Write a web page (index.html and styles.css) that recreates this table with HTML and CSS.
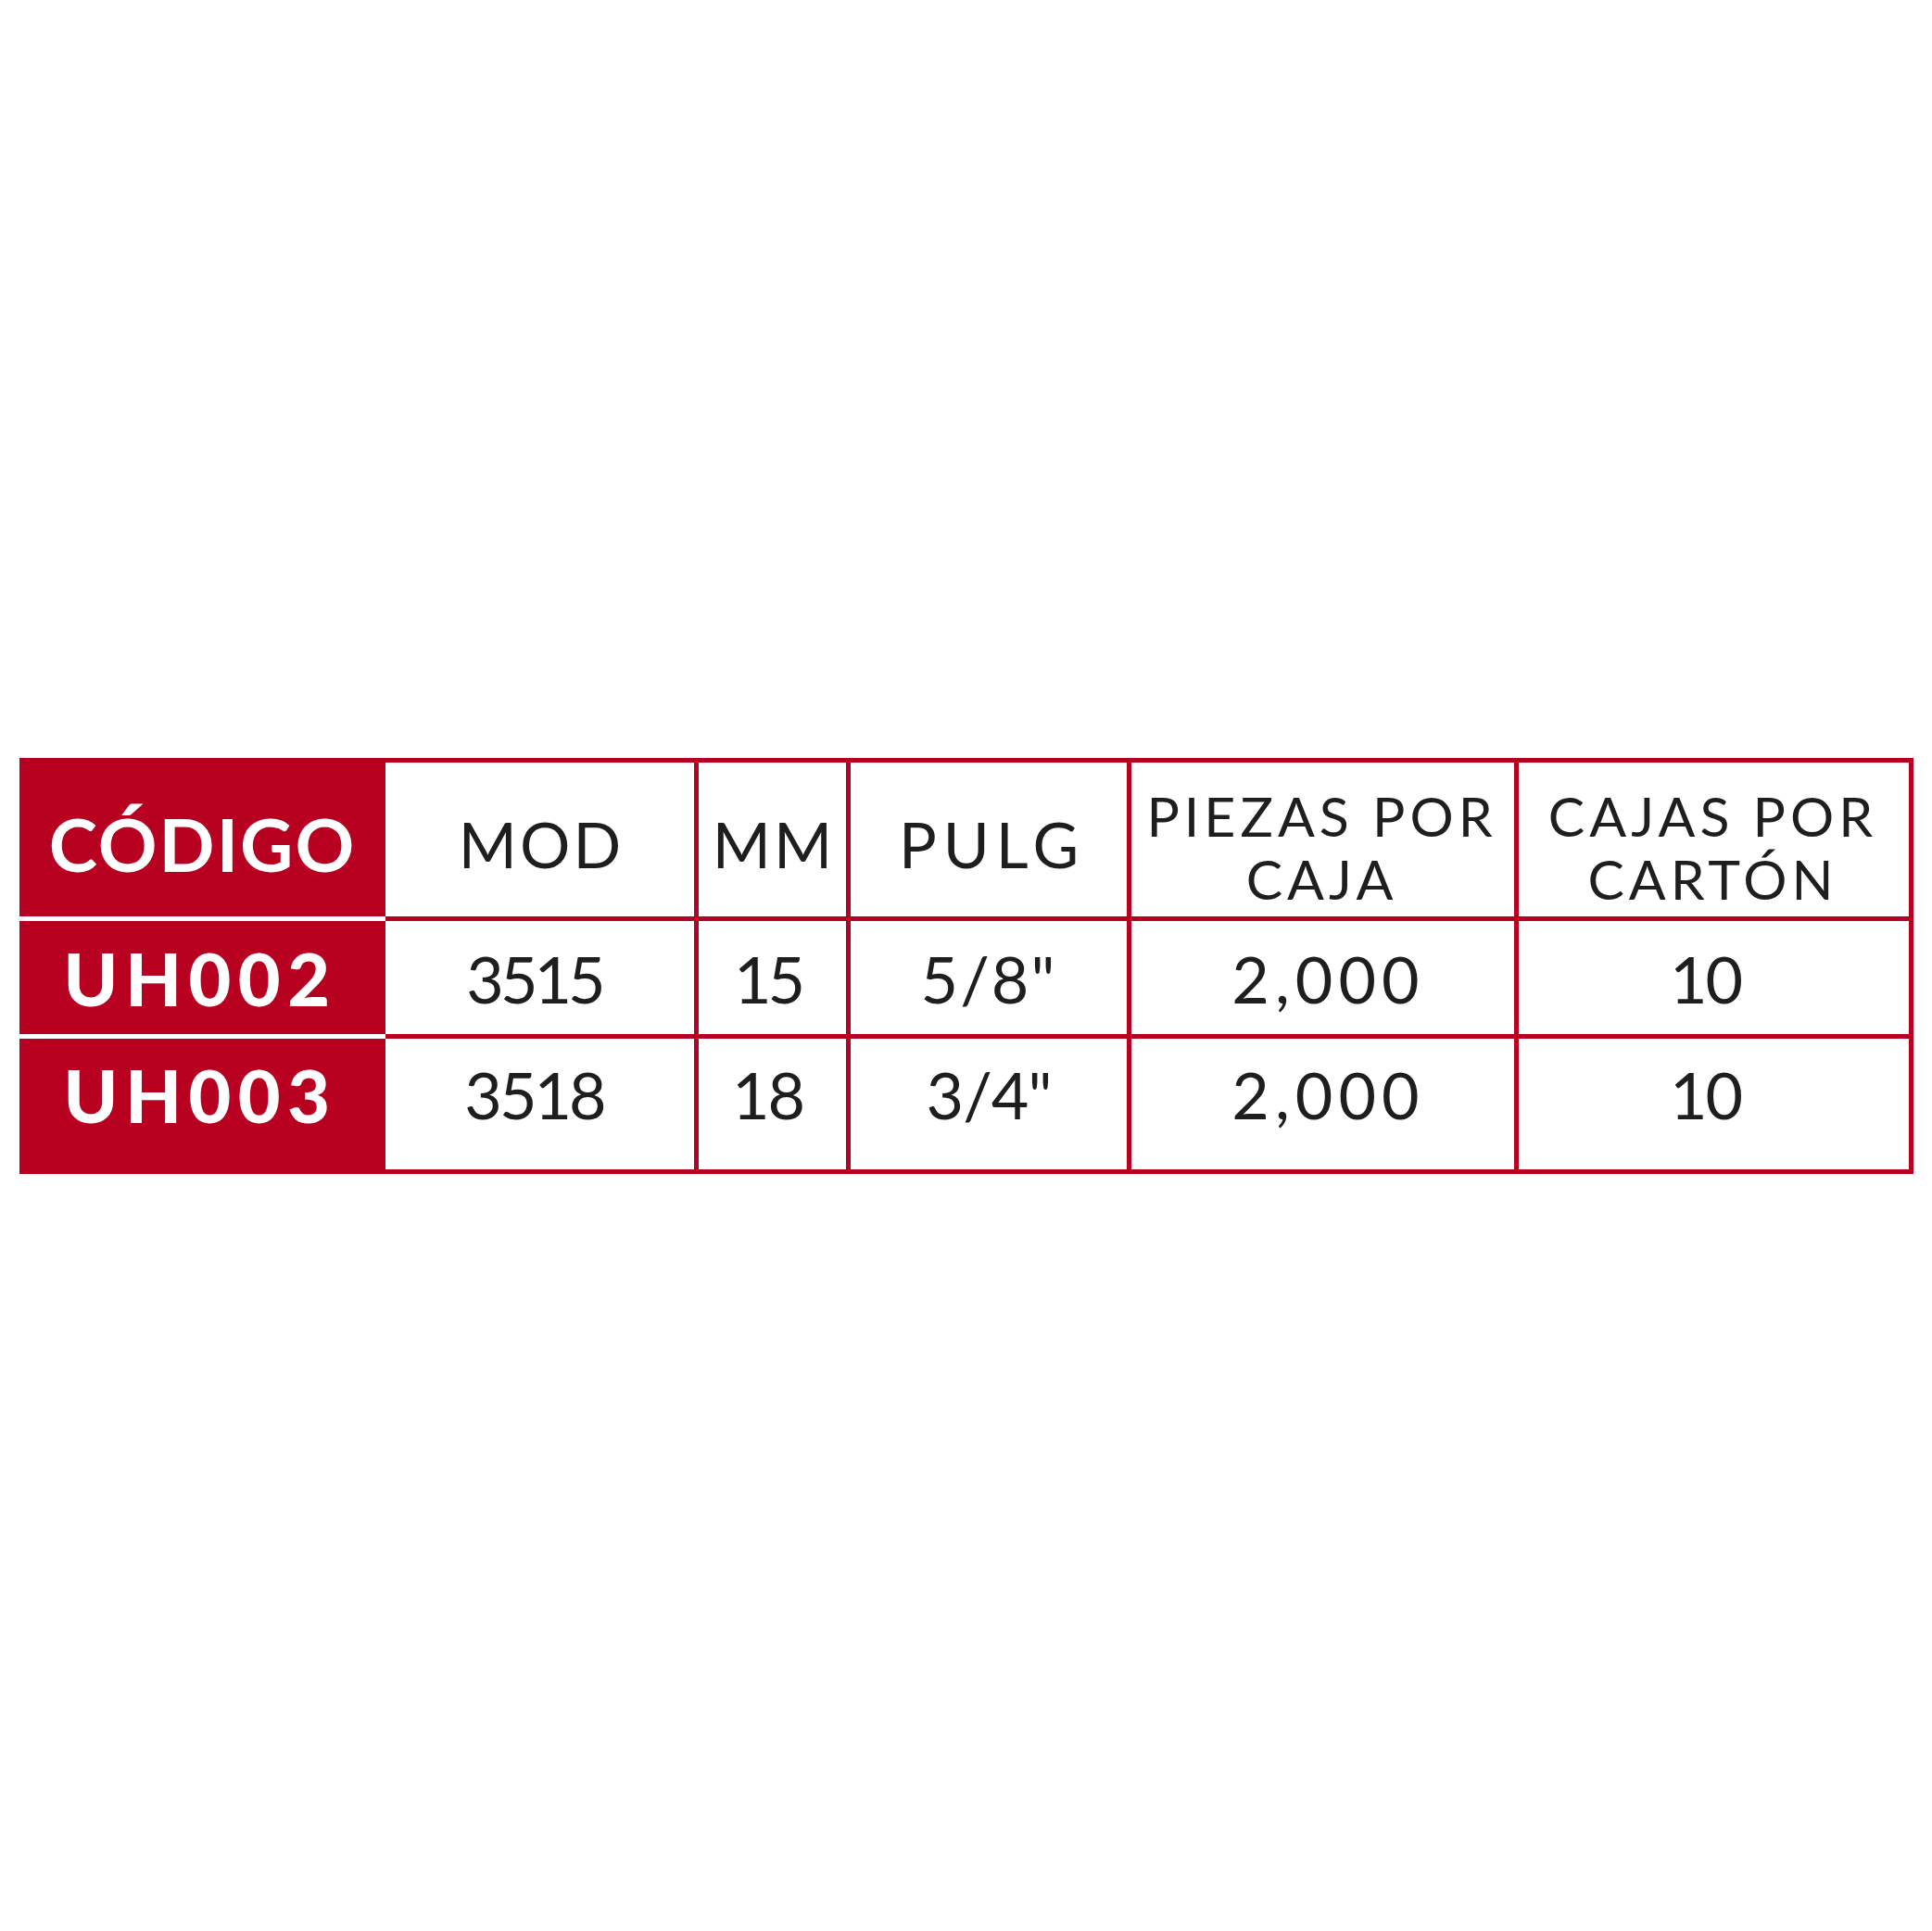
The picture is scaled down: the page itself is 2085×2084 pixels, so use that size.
FILE: index.html
```html
<!DOCTYPE html>
<html lang="es">
<head>
<meta charset="utf-8">
<title>Tabla UH</title>
<link rel="stylesheet" href="styles.css">
</head>
<body>
<main class="page">
  <div class="grid">
    <div class="cell code head-code">CÓDIGO</div>
    <div class="cell head">MOD</div>
    <div class="cell head">MM</div>
    <div class="cell head wide">PULG</div>
    <div class="cell head two">PIEZAS POR<br>CAJA</div>
    <div class="cell head two last">CAJAS POR<br>CARTÓN</div>

    <div class="cell code r1 uh">UH002</div>
    <div class="cell num r1 mod ls-m4">3515</div>
    <div class="cell num r1 mm ls-m4">15</div>
    <div class="cell num r1 ls-p2">5/8"</div>
    <div class="cell num r1 pcs ls-p6">2,000</div>
    <div class="cell num r1 box ls-m2">10</div>

    <div class="cell code r2 end uh">UH003</div>
    <div class="cell num r2 end mod ls-m3">3518</div>
    <div class="cell num r2 end mm ls-m2">18</div>
    <div class="cell num r2 end ls-m1">3/4"</div>
    <div class="cell num r2 end pcs ls-p6">2,000</div>
    <div class="cell num r2 end box ls-m2">10</div>
  </div>
</main>
</body>
</html>
```
FILE: styles.css
```css
html, body {
  margin: 0;
  padding: 0;
  background: #ffffff;
}

.page {
  box-sizing: border-box;
  height: 2084px;
  padding: 0 20px 0 21px;
  display: flex;
  flex-direction: column;
  justify-content: center;
}

.grid {
  display: grid;
  grid-template-columns: 395px 338px 164px 303px 418px 426px;
  grid-template-rows: 171px 127px 141px;
  border-top: 5px solid #b80021;
  border-bottom: 5px solid #b80021;
  font-family: Lato, "Noto Sans", sans-serif;
  color: #1f1e1c;
}

.cell {
  box-sizing: border-box;
  display: flex;
  align-items: center;
  justify-content: center;
  text-align: center;
  background: #ffffff;
  border-right: 5px solid #b80021;
  border-bottom: 5px solid #b80021;
}

.cell.end {
  border-bottom: 0;
}

.cell.code {
  background: #b80021;
  color: #ffffff;
  border-right: 0;
  border-bottom: 5px solid #ffffff;
  font-weight: 700;
  font-size: 79px;
  letter-spacing: 2px;
}

.cell.code.end {
  border-bottom: 0;
}

.cell.code.uh {
  font-weight: 900;
  letter-spacing: 7.5px;
  padding-right: 5px;
}

.head {
  font-size: 68px;
  letter-spacing: 3px;
  text-indent: 3px;
  padding-top: 10px;
}

.head.wide {
  letter-spacing: 7px;
  text-indent: 7px;
}

.head-code {
  font-size: 77px;
  padding-top: 10px;
}

.head.two {
  font-size: 59px;
  line-height: 68px;
  letter-spacing: 5px;
  text-indent: 0;
  padding-top: 18px;
  padding-right: 2px;
}

.num {
  font-size: 70px;
}

.num.mod {
  padding-right: 12px;
}

.num.mm {
  padding-right: 10px;
}

.num.pcs {
  padding-left: 12px;
}

.num.box {
  padding-right: 18px;
}

.ls-m4 { letter-spacing: -4px; }
.ls-m3 { letter-spacing: -3px; }
.ls-m2 { letter-spacing: -2px; }
.ls-m1 { letter-spacing: -1px; }
.ls-p2 { letter-spacing: 2px; }
.ls-p6 { letter-spacing: 6px; }

.r1 {
  padding-top: 3px;
}

.r1.uh {
  padding-top: 1px;
}

.r2 {
  padding-bottom: 20px;
}
```
